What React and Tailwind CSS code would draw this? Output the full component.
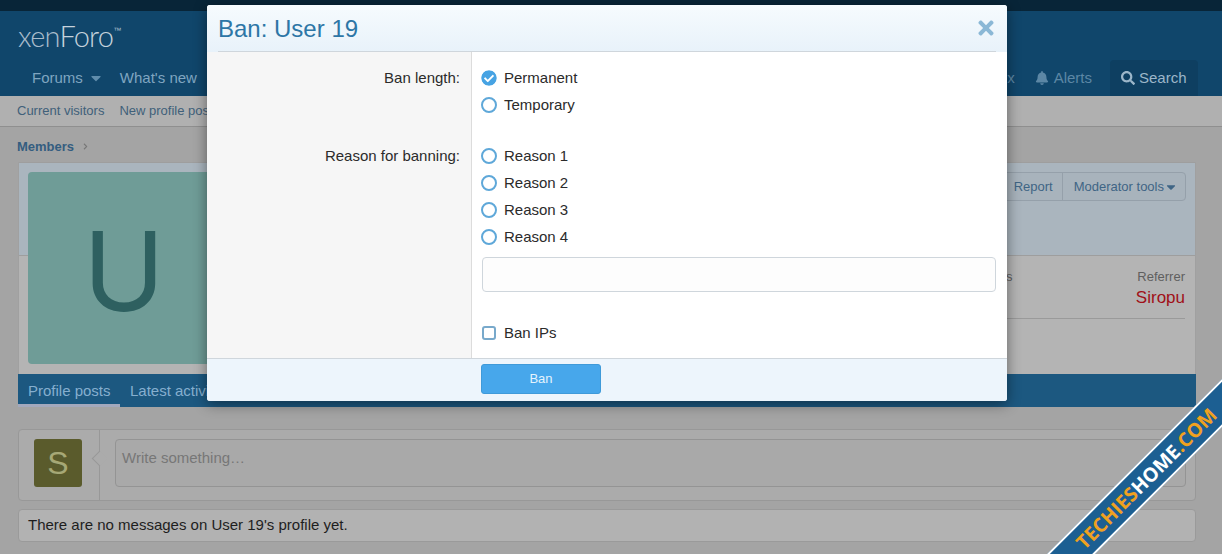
import React from "react";
import { FaTimes, FaBell, FaSearch, FaCheckCircle, FaCaretDown, FaChevronRight } from "react-icons/fa";

function Radio({ label, checked }) {
  return (
    <div className="flex items-center h-[27px]">
      {checked ? (
        <FaCheckCircle className="w-[16px] h-[16px] mb-[2px] text-[#47a3e3] bg-white rounded-full" />
      ) : (
        <span className="w-[16px] h-[16px] mb-[2px] rounded-full border-[2.5px] border-[#5fa8d9] bg-white" />
      )}
      <span className="ml-[7px] text-[15px] text-[#2b2b2b]">{label}</span>
    </div>
  );
}

export default function App() {
  return (
    <div className="relative h-[554px] w-full overflow-hidden bg-[#a4a4a4] text-[15px] text-[#1e1e1e]" style={{ fontFamily: '"Liberation Sans", Arial, sans-serif' }}>
      <div className="h-[11px] bg-[#082538]" />
      <div className="h-[49px] bg-[#10466b] pl-[18px] flex items-center">
        <span className="text-[29px] leading-none text-[#a9bccb] font-light tracking-[-0.8px]" style={{ fontFamily: '"Lato", sans-serif' }}>xen<span className="text-[#c5d2dc]">Foro</span></span>
        <span className="text-[8px] text-[#a9bccb] self-start mt-[14px]">™</span>
      </div>
      <div className="h-[36px] bg-[#10466b] flex items-center pl-[32px] text-[#7fa5c0]">
        <span>Forums</span>
        <FaCaretDown className="ml-[5px] w-[16px] h-[16px] text-[#5f8cab]" />
        <span className="ml-[16px]">What's new</span>
        <div className="ml-auto flex items-center h-[36px]">
          <span className="mr-[20px] text-[#5c87a5]">x</span>
          <FaBell className="w-[14px] h-[14px] text-[#5c87a5] mr-[5px]" />
          <span className="text-[#5c87a5] mr-[18px]">Alerts</span>
          <div className="w-[88px] h-[36px] bg-[#0e3f61] rounded-t-[4px] flex items-center pl-[11px] mr-[24px] text-[#9cb6c9] text-[15px]">
            <FaSearch className="w-[14px] h-[14px] mr-[4px]" />
            <span>Search</span>
          </div>
        </div>
      </div>
      <div className="h-[31px] bg-[#b0b0b0] border-b border-[#8f8f8f] flex items-center pl-[17px] text-[13px] text-[#40607a]">
        <span>Current visitors</span>
        <span className="ml-[15px]">New profile posts</span>
      </div>
      <div className="h-[35px] flex items-center pl-[17px] pt-[4px] text-[13px] text-[#345d80]">
        <span className="font-bold">Members</span>
        <FaChevronRight className="ml-[8px] w-[7px] h-[7px] text-[#777777]" />
      </div>
      <div className="ml-[18px] mr-[26px] h-[212px] bg-[#b4b4b4] border-x border-[#a0a0a0] flex flex-col">
        <div className="h-[94px] bg-[#aab5be] border-b border-[#9e9e9e] border-t flex justify-end pt-[9px] pr-[9px]">
          <div className="h-[29px] flex text-[13px] text-[#3f6585] border border-[#95a0aa] rounded-[4px] bg-[#a8b3bc]">
            <span className="w-[60px] pr-[9px] text-right border-r border-[#95a0aa] leading-[27px]">Report</span>
            <span className="pl-[11px] pr-[7px] leading-[27px] flex items-center">Moderator tools<FaCaretDown className="w-[14px] h-[14px]" /></span>
          </div>
        </div>
        <div className="flex-1 flex justify-end pr-[10px] pt-[13px]">
          <div className="w-[179px] h-[50px] border-b border-[#9a9a9a] flex justify-between">
            <span className="text-[13px] text-[#5f5f5f] leading-[16px]">s</span>
            <div className="text-right">
              <div className="text-[13px] text-[#5f5f5f] leading-[16px]">Referrer</div>
              <div className="text-[17px] text-[#a01018] leading-[26px]">Siropu</div>
            </div>
          </div>
        </div>
      </div>
      <div className="ml-[18px] mr-[26px] h-[33px] bg-[#1c5880] flex items-stretch text-[#86afcf]">
        <div className="px-[10px] border-b-[3px] border-[#a3a9bd] flex items-center pt-[5px] w-[102px] whitespace-nowrap">Profile posts</div>
        <div className="pl-[10px] pt-[2px] flex items-center whitespace-nowrap">Latest activity</div>
      </div>
      <div className="ml-[18px] mr-[26px] mt-[22px] h-[72px] bg-[#ababab] border border-[#989898] rounded-[4px] flex">
        <div className="relative w-[81px] border-r border-[#989898] pl-[15px] pt-[9px]">
          <div className="w-[48px] h-[48px] rounded-[3px] bg-[#5a5b2c] text-[#a6a876] text-[32px] flex items-center justify-center">S</div>
          <div className="absolute right-[-6px] top-[23px] w-[11px] h-[11px] rotate-45 bg-[#ababab] border-l border-b border-[#989898]" />
        </div>
        <div className="flex-1 py-[9px] pl-[15px] pr-[9px]">
          <div className="h-[48px] border border-[#949494] rounded-[4px] bg-[#a9a9a9] px-[6px] pt-[7px] text-[#777777]">Write something…</div>
        </div>
      </div>
      <div className="ml-[18px] mr-[26px] mt-[8px] h-[33px] bg-[#b2b2b2] border border-[#9a9a9a] rounded-[4px] pl-[9px] flex items-center text-[#1e1e1e]">There are no messages on User 19's profile yet.</div>

      {/* avatar overlaps the cover and the row beneath it */}
      <div className="absolute left-[28px] top-[172px] w-[192px] h-[192px] rounded-[4px] bg-[#6f9c97] flex items-center justify-center pt-[5px] text-[#2e6060] text-[110px] leading-none" style={{ fontFamily: '"Inter", sans-serif' }}>
        <span>U</span>
      </div>

      {/* modal */}
      <div className="absolute left-[207px] top-[5px] w-[800px] h-[396px] rounded-[3px] bg-white flex flex-col overflow-hidden shadow-[0_3px_14px_rgba(0,0,0,0.45)]">
        <div className="h-[47px] shrink-0 bg-gradient-to-b from-[#f6fbfe] to-[#e8f2fa] px-[11px]">
          <div className="h-[47px] border-b border-[#cfd6dc] flex items-center justify-between">
            <span className="text-[24px] text-[#2d76a6] pt-[1px]">Ban: User 19</span>
            <FaTimes className="w-[22px] h-[22px] text-[#8bb8d6] mr-[-1px]" />
          </div>
        </div>
        <div className="flex-1 flex min-h-0">
          <div className="w-[265px] shrink-0 bg-[#f6f6f6] border-r border-[#dcdcdc] pr-[11px] text-right text-[15px] text-[#2b2b2b]">
            <div className="pt-[17px] leading-[18px]">Ban length:</div>
            <div className="mt-[60px] leading-[18px]">Reason for banning:</div>
          </div>
          <div className="flex-1 pl-[9px] pr-[11px] pt-[13px]">
            <Radio label="Permanent" checked />
            <Radio label="Temporary" />
            <div className="h-[24px]" />
            <Radio label="Reason 1" />
            <Radio label="Reason 2" />
            <Radio label="Reason 3" />
            <Radio label="Reason 4" />
            <div className="mt-[6px] ml-[1px] h-[35px] rounded-[4px] border border-[#cfd6dc] bg-[#fdfdfd]" />
            <div className="mt-[28px] flex items-center h-[27px] pl-[1px]">
              <span className="w-[14px] h-[14px] mb-[2px] rounded-[3px] border-2 border-[#78a9cb] bg-white" />
              <span className="ml-[8px] text-[15px] text-[#2b2b2b]">Ban IPs</span>
            </div>
          </div>
        </div>
        <div className="h-[43px] shrink-0 bg-[#edf5fc] border-t border-[#cfd6dc] pl-[274px] pt-[5px]">
          <div className="w-[120px] h-[30px] rounded-[3px] bg-[#47a7eb] border border-[#3f9ad9] text-[13px] text-[#e3f3fd] flex items-center justify-center">Ban</div>
        </div>
      </div>

      {/* corner ribbon */}
      <div className="absolute left-[990px] top-[458px] w-[320px] h-[34px] -rotate-45 bg-[#1c5f92] border-y-2 border-white flex items-center justify-center pr-[10px] font-bold text-[19.5px] whitespace-nowrap" style={{ fontFamily: '"Open Sans", sans-serif' }}>
        <span className="text-[#f0a11f]">TECHIES</span><span className="text-white">HOME</span><span className="text-[#f0a11f]">.COM</span>
      </div>
    </div>
  );
}
